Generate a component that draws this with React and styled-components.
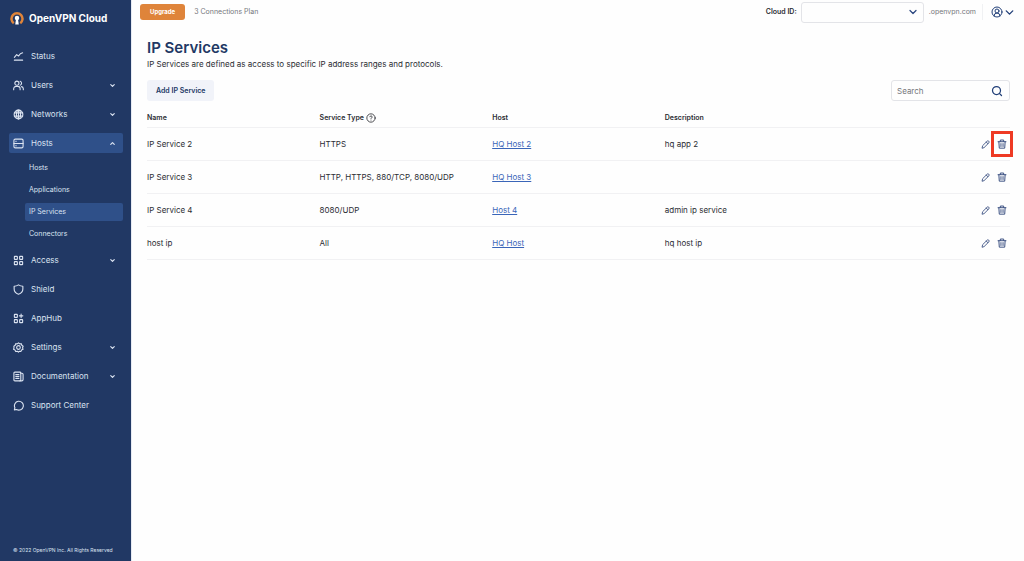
import React from 'react'
import styled, { createGlobalStyle } from 'styled-components'
import { ChevronDown, ChevronUp, CircleHelp, CircleUserRound, Search } from 'lucide-react'

const GlobalStyle = createGlobalStyle`
    * {
        box-sizing: border-box;
    }

    body {
        margin: 0;
        background-color: #fefefe;
        color: #2b2d33;
        font-family: Inter, "Liberation Sans", sans-serif;
        font-size: 8px;
        line-height: 12px;
    }

    button, input, select {
        font-family: inherit;
        font-size: inherit;
        line-height: inherit;
    }
`

const Layout = styled.div`
    display: flex;
    min-height: 100vh;
`

const Sidebar = styled.aside`
    display: flex;
    flex-direction: column;
    flex: 0 0 131px;
    padding: 11px 8px 5px 9px;
    background-color: #213864;
    color: #dbe3f1;
`

const Brand = styled.div`
    display: flex;
    align-items: center;
    gap: 5px;
    margin-bottom: 21px;
    color: white;
    font-size: 10px;
    font-weight: 700;
    line-height: 14px;
`

const NavList = styled.ul`
    display: flex;
    flex-direction: column;
    gap: 9px;
    margin: 0;
    padding: 0;
    list-style: none;
`

const NavButton = styled.button`
    display: flex;
    align-items: center;
    gap: 7px;
    width: 100%;
    height: 20px;
    padding: 0 7px 0 4px;
    border: 0;
    border-radius: 2px;
    background-color: ${props => props.$active ? '#2f5089' : 'transparent'};
    color: inherit;
    text-align: left;
`

const NavLabel = styled.span`
    flex: 1;
`

const SubList = styled.ul`
    display: flex;
    flex-direction: column;
    gap: 4px;
    margin: 6px 0 -2px 16px;
    padding: 0;
    list-style: none;
`

const SubLink = styled.a`
    display: block;
    padding: 3px 4px;
    border-radius: 2px;
    background-color: ${props => props.$active ? '#2f5089' : 'transparent'};
    color: inherit;
    font-size: 7px;
    text-decoration: none;
`

const Copyright = styled.small`
    margin-top: auto;
    padding-left: 4px;
    font-size: 5px;
    line-height: 12px;
`

const Main = styled.main`
    flex: 1;
    min-width: 0;
    border-left: 1px solid #e6eaf3;
`

const TopBar = styled.header`
    display: flex;
    align-items: center;
    height: 24px;
    padding: 0 8px;
    color: #75777c;
    font-size: 7px;
`

const UpgradeButton = styled.button`
    height: 16px;
    margin-right: 9px;
    padding: 0 10px;
    border: 0;
    border-radius: 3px;
    background-color: #df843a;
    color: white;
    font-size: 6px;
    font-weight: 700;
`

const CloudLabel = styled.label`
    margin: 0 4px 0 auto;
    color: #2b2d33;
    font-weight: 600;
`

const SelectWrap = styled.div`
    display: grid;
    align-items: center;
    width: 123px;
    margin-right: 5px;

    > * {
        grid-area: 1 / 1;
    }

    svg {
        justify-self: end;
        margin-right: 5px;
        color: #2b4780;
        pointer-events: none;
    }
`

const CloudSelect = styled.select`
    width: 100%;
    height: 21px;
    border: 1px solid #e3e4e8;
    border-radius: 3px;
    background-color: #fefefe;
    appearance: none;
`

const AccountButton = styled.button`
    display: flex;
    align-items: center;
    height: 16px;
    margin-left: 6px;
    padding: 0 0 0 8px;
    border: 0;
    border-left: 1px solid #f0f1f3;
    background: none;
    color: #213f78;
`

const Content = styled.section`
    padding: 14px 14px 0 15px;
`

const Title = styled.h1`
    margin: 0;
    color: #213864;
    font-size: 15px;
    font-weight: 600;
    line-height: 20px;
`

const Description = styled.p`
    margin: 0;
`

const Toolbar = styled.div`
    display: flex;
    justify-content: space-between;
    margin: 10px 0 7px;
`

const AddButton = styled.button`
    height: 21px;
    padding: 0 9px;
    border: 0;
    border-radius: 3px;
    background-color: #f1f3f9;
    color: #213864;
    font-size: 7px;
    font-weight: 600;
`

const SearchBox = styled.label`
    display: flex;
    align-items: center;
    width: 119px;
    height: 21px;
    padding: 0 6px 0 5px;
    border: 1px solid #e3e4e8;
    border-radius: 3px;
    color: #213f78;
`

const SearchInput = styled.input`
    flex: 1;
    min-width: 0;
    padding: 0;
    border: 0;
    outline: 0;
    background: none;

    &::placeholder {
        color: #75777c;
    }
`

const Table = styled.table`
    width: 100%;
    table-layout: fixed;
    border-collapse: separate;
    border-spacing: 0;
`

const HeadCell = styled.th`
    height: 20px;
    padding: 0;
    border-bottom: 1px solid #f1f1f3;
    font-size: 7px;
    font-weight: 600;
    text-align: left;

    svg {
        margin-left: 2px;
        vertical-align: middle;
    }
`

const Cell = styled.td`
    height: 33px;
    padding: 0;
    border-bottom: 1px solid #f1f1f3;
`

const HostLink = styled.a`
    color: #3a65b8;
    text-decoration: underline;
`

const Actions = styled.div`
    display: flex;
    align-items: center;
    justify-content: flex-end;
    gap: 7px;
    padding-right: 3px;
`

const IconButton = styled.button`
    position: relative;
    display: flex;
    padding: 0;
    border: 0;
    background: none;
    color: #3d5283;
`

const Highlight = styled.span`
    position: absolute;
    inset: -8px -6px;
    border: 3px solid #ee3a24;
`

const Icon = ({ size = 11, stroke = 2.4, children }) => (
    <svg
        width={size}
        height={size}
        viewBox="0 0 24 24"
        fill="none"
        stroke="currentColor"
        strokeWidth={stroke}
        strokeLinecap="round"
        strokeLinejoin="round"
        aria-hidden="true"
    >
        {children}
    </svg>
)

const icons = {
    status: <path d="M3 14l5-6 4 3 4-5 5-2M3 20h18" />,
    users: (
        <>
            <circle cx="8.5" cy="7" r="4.5" />
            <path d="M1.5 21v-2a5 5 0 0 1 5-5h4a5 5 0 0 1 5 5v2M15.5 2.7a4.5 4.5 0 0 1 0 8.6M18.5 14.5a5 5 0 0 1 4 4.5v2" />
        </>
    ),
    networks: (
        <>
            <circle cx="12" cy="12" r="9.5" />
            <ellipse cx="12" cy="12" rx="4.5" ry="9.5" />
            <path d="M12 3v18M3 8.5h18M3 15.5h18" />
        </>
    ),
    hosts: (
        <>
            <rect x="2" y="2.5" width="20" height="19" rx="3" />
            <path d="M2 12h20M6 7.2h1M6 16.8h1" />
        </>
    ),
    access: (
        <>
            <rect x="3" y="3" width="6.5" height="6.5" rx="1" />
            <rect x="14.5" y="3" width="6.5" height="6.5" rx="1" />
            <rect x="3" y="14.5" width="6.5" height="6.5" rx="1" />
            <rect x="14.5" y="14.5" width="6.5" height="6.5" rx="1" />
        </>
    ),
    shield: <path d="M12 2c3 2 6 3 9.5 3v6c0 6-4 9.5-9.5 11.5C6.5 20.5 2.5 17 2.5 11V5C6 5 9 4 12 2z" />,
    apphub: (
        <>
            <rect x="3" y="3" width="6.5" height="6.5" rx="1" />
            <rect x="3" y="14.5" width="6.5" height="6.5" rx="1" />
            <rect x="14.5" y="14.5" width="6.5" height="6.5" rx="1" />
            <path d="M17.7 2.5v7.5M14 6.2h7.5" />
        </>
    ),
    settings: (
        <>
            <path d="M12 1.8l2.8 2.2 3.5-.3.9 3.5 2.9 2-1.2 3.3 1 3.5-3.2 1.5-1.6 3.2-3.5-.5L12 22.2l-2.600-2-3.5.5-1.6-3.2L1.2 16l1-3.5L1.900 9.200l2.900-2 .9-3.500 3.500.3z" />
            <circle cx="12" cy="12" r="4" />
        </>
    ),
    documentation: (
        <>
            <rect x="2" y="2.5" width="15" height="19" rx="2" />
            <path d="M17 5h2.5A2.5 2.5 0 0 1 22 7.5v11a3 3 0 0 1-3 3h-4M6 8h7M6 12h7M6 16h7" />
        </>
    ),
    support: <path d="M3 21.5l1.2-4.7A9.7 9.7 0 1 1 8 20.8z" />,
    pencil: <path d="M3 21l1.3-5.8L16.5 3a2.8 2.8 0 0 1 4 0l.5.5a2.8 2.8 0 0 1 0 4L8.8 19.7zM14 5.5l4.5 4.5" />,
    trash: <path d="M2.5 6.5h19M8 6V2.5h8V6M4.5 7l1 15h13l1-15M9.5 11v7M14.5 11v7" />,
}

const Logo = () => (
    <svg width="15" height="14" viewBox="0 0 30 28" aria-hidden="true">
        <path d="M9.5 24.5A11 11 0 1 1 22.5 24.5" fill="none" stroke="#df843a" strokeWidth="5" />
        <circle cx="16" cy="14" r="4.5" fill="white" />
        <path d="M14 16h4l1.5 11h-7z" fill="white" />
    </svg>
)

const navItems = [
    { icon: 'status', label: 'Status' },
    { icon: 'users', label: 'Users', expandable: true },
    { icon: 'networks', label: 'Networks', expandable: true },
    {
        icon: 'hosts',
        label: 'Hosts',
        expandable: true,
        active: true,
        children: ['Hosts', 'Applications', 'IP Services', 'Connectors'],
    },
    { icon: 'access', label: 'Access', expandable: true },
    { icon: 'shield', label: 'Shield' },
    { icon: 'apphub', label: 'AppHub' },
    { icon: 'settings', label: 'Settings', expandable: true },
    { icon: 'documentation', label: 'Documentation', expandable: true },
    { icon: 'support', label: 'Support Center' },
]

const services = [
    { name: 'IP Service 2', type: 'HTTPS', host: 'HQ Host 2', description: 'hq app 2', highlighted: true },
    { name: 'IP Service 3', type: 'HTTP, HTTPS, 880/TCP, 8080/UDP', host: 'HQ Host 3', description: '' },
    { name: 'IP Service 4', type: '8080/UDP', host: 'Host 4', description: 'admin ip service' },
    { name: 'host ip', type: 'All', host: 'HQ Host', description: 'hq host ip' },
]

const NavItem = ({ item }) => {
    const { icon, label, expandable, active, children } = item
    const Chevron = active ? ChevronUp : ChevronDown

    return (
        <li>
            <NavButton type="button" $active={active}>
                <Icon>{icons[icon]}</Icon>
                <NavLabel>{label}</NavLabel>
                {expandable && <Chevron size={7} strokeWidth={4} />}
            </NavButton>
            {children && (
                <SubList>
                    {children.map(child => (
                        <li key={child}>
                            <SubLink href="#" $active={child === 'IP Services'}>{child}</SubLink>
                        </li>
                    ))}
                </SubList>
            )}
        </li>
    )
}

const ServiceRow = ({ service }) => (
    <tr>
        <Cell>{service.name}</Cell>
        <Cell>{service.type}</Cell>
        <Cell><HostLink href="#">{service.host}</HostLink></Cell>
        <Cell>{service.description}</Cell>
        <Cell>
            <Actions>
                <IconButton type="button" aria-label={`Edit ${service.name}`}>
                    <Icon size={9}>{icons.pencil}</Icon>
                </IconButton>
                <IconButton type="button" aria-label={`Delete ${service.name}`}>
                    <Icon size={10}>{icons.trash}</Icon>
                    {service.highlighted && <Highlight />}
                </IconButton>
            </Actions>
        </Cell>
    </tr>
)

const App = () => (
    <>
        <GlobalStyle />
        <Layout>
            <Sidebar>
                <Brand>
                    <Logo />
                    OpenVPN Cloud
                </Brand>
                <nav>
                    <NavList>
                        {navItems.map(item => <NavItem key={item.label} item={item} />)}
                    </NavList>
                </nav>
                <Copyright>© 2022 OpenVPN Inc. All Rights Reserved</Copyright>
            </Sidebar>
            <Main>
                <TopBar>
                    <UpgradeButton type="button">Upgrade</UpgradeButton>
                    <span>3 Connections Plan</span>
                    <CloudLabel htmlFor="cloud-id">Cloud ID:</CloudLabel>
                    <SelectWrap>
                        <CloudSelect id="cloud-id" />
                        <ChevronDown size={12} strokeWidth={2.5} />
                    </SelectWrap>
                    <span>.openvpn.com</span>
                    <AccountButton type="button" aria-label="Account">
                        <CircleUserRound size={12} />
                        <ChevronDown size={13} strokeWidth={2.5} />
                    </AccountButton>
                </TopBar>
                <Content>
                    <Title>IP Services</Title>
                    <Description>IP Services are defined as access to specific IP address ranges and protocols.</Description>
                    <Toolbar>
                        <AddButton type="button">Add IP Service</AddButton>
                        <SearchBox>
                            <SearchInput type="text" placeholder="Search" aria-label="Search" />
                            <Search size={12} strokeWidth={2.5} />
                        </SearchBox>
                    </Toolbar>
                    <Table>
                        <thead>
                            <tr>
                                <HeadCell>Name</HeadCell>
                                <HeadCell>Service Type<CircleHelp size={10} /></HeadCell>
                                <HeadCell>Host</HeadCell>
                                <HeadCell>Description</HeadCell>
                                <HeadCell aria-label="Actions" />
                            </tr>
                        </thead>
                        <tbody>
                            {services.map(service => <ServiceRow key={service.name} service={service} />)}
                        </tbody>
                    </Table>
                </Content>
            </Main>
        </Layout>
    </>
)

export default App
